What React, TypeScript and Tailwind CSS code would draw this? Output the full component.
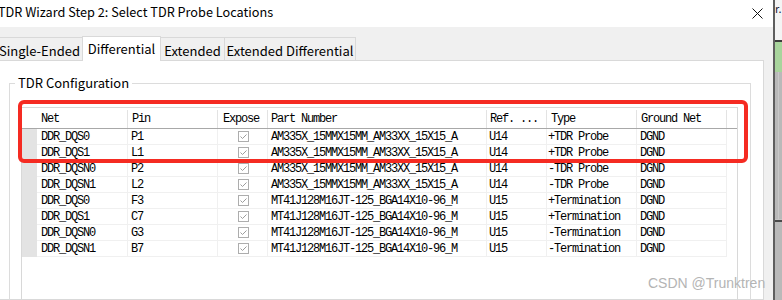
import React from 'react'

const partA = 'AM335X_15MMX15MM_AM33XX_15X15_A'
const partB = 'MT41J128M16JT-125_BGA14X10-96_M'

const rows = [
  ['DDR_DQS0', 'P1', partA, 'U14', '+TDR Probe', 'DGND'],
  ['DDR_DQS1', 'L1', partA, 'U14', '+TDR Probe', 'DGND'],
  ['DDR_DQSN0', 'P2', partA, 'U14', '-TDR Probe', 'DGND'],
  ['DDR_DQSN1', 'L2', partA, 'U14', '-TDR Probe', 'DGND'],
  ['DDR_DQS0', 'F3', partB, 'U15', '+Termination', 'DGND'],
  ['DDR_DQS1', 'C7', partB, 'U15', '+Termination', 'DGND'],
  ['DDR_DQSN0', 'G3', partB, 'U15', '-Termination', 'DGND'],
  ['DDR_DQSN1', 'B7', partB, 'U15', '-Termination', 'DGND'],
]

const mono = "font-['Liberation_Mono',monospace] text-[12px] tracking-[-1.2px]"

function CheckBox() {
  return (
    <span className="flex h-[11px] w-[11px] items-center justify-center border border-[#adadad] bg-white">
      <svg width="9" height="9" viewBox="0 0 9 9">
        <path d="M1.5 4.5 L3.5 6.5 L7.5 2.5" fill="none" stroke="#9c9c9c" strokeWidth="1" />
      </svg>
    </span>
  )
}

function TitleBar() {
  return (
    <div className="flex h-[27px] shrink-0 items-center justify-between bg-white pb-[2px]">
      <span className="-ml-[2px] whitespace-nowrap text-[12.7px] leading-none">TDR Wizard Step 2: Select TDR Probe Locations</span>
      <svg className="mr-[10px] mt-[2px]" width="11" height="11" viewBox="0 0 11 11">
        <path d="M0.5 0.5 L10.5 10.5 M10.5 0.5 L0.5 10.5" stroke="#111" strokeWidth="1" />
      </svg>
    </div>
  )
}

function Tabs() {
  return (
    <div className="flex h-[24px] shrink-0 items-end whitespace-nowrap text-[13px] leading-none">
      <div className="-ml-[4px] flex h-[23px] w-[87px] items-center justify-center border border-b-0 border-[#d9d9d9] bg-[#f0f0f0] pt-[3px]">
        Single-Ended
      </div>
      <div className="relative z-10 -mb-px -ml-px flex h-[25px] w-[79px] items-center justify-center border border-b-0 border-[#d9d9d9] bg-white pb-[1px]">
        Differential
      </div>
      <div className="-ml-px flex h-[23px] w-[65px] items-center justify-center border border-b-0 border-[#d9d9d9] bg-[#f0f0f0] pt-[3px]">
        Extended
      </div>
      <div className="-ml-px flex h-[23px] w-[132px] items-center justify-center border border-b-0 border-[#d9d9d9] bg-[#f0f0f0] pt-[3px]">
        Extended Differential
      </div>
    </div>
  )
}

function Grid() {
  return (
    <div className={`ml-[11px] h-[220px] w-[717px] shrink-0 whitespace-nowrap border border-[#d8d8d8] ${mono}`}>
      <div className="flex h-[21px] border-b border-[#a8a8a8] pt-[2px]">
        <div className="w-[15px]" />
        <div className="flex w-[91px] items-center border-r border-[#e3e3e3] pl-[4px]">Net</div>
        <div className="flex w-[90px] items-center border-r border-[#e3e3e3] pl-[4px]">Pin</div>
        <div className="flex w-[50px] items-center border-r border-[#e3e3e3] pl-[5px]">Expose</div>
        <div className="flex w-[219px] items-center border-r border-[#e3e3e3] pl-[3px]">Part Number</div>
        <div className="flex w-[60px] items-center border-r border-[#e3e3e3] pl-[3px]">Ref. ...</div>
        <div className="flex w-[90px] items-center border-r border-[#e3e3e3] pl-[4px]">Type</div>
        <div className="flex w-[90px] items-center border-r border-[#e3e3e3] pl-[4px]">Ground Net</div>
        <div className="w-[10px]" />
      </div>
      {rows.map((r, i) => (
        <div key={i} className="flex h-[16px]">
          <div className="w-[15px] bg-[#e3e3e3]" />
          <div className="flex w-[91px] items-center border-r border-b border-[#f0f0f0] pl-[4px]">{r[0]}</div>
          <div className="flex w-[90px] items-center border-r border-b border-[#f0f0f0] pl-[3px]">{r[1]}</div>
          <div className="flex w-[50px] items-center justify-center border-r border-b border-[#f0f0f0] pl-[1px]">
            <CheckBox />
          </div>
          <div className="flex w-[219px] items-center border-r border-b border-[#f0f0f0] pl-[3px]">{r[2]}</div>
          <div className="flex w-[60px] items-center border-r border-b border-[#f0f0f0] pl-[2px]">{r[3]}</div>
          <div className="flex w-[90px] items-center border-r border-b border-[#f0f0f0] pl-[1px]">{r[4]}</div>
          <div className="flex w-[90px] items-center border-r border-b border-[#f0f0f0] pl-[3px]">{r[5]}</div>
        </div>
      ))}
    </div>
  )
}

function RightStrip() {
  return (
    <div className="flex w-[7px] shrink-0 flex-col overflow-hidden">
      <div className="h-[40px] shrink-0 whitespace-nowrap bg-[#f4f4f4] pt-[3px] text-[11px] leading-none text-[#223]">r.</div>
      <div className="h-[2px] shrink-0 bg-[#3c3c3c]" />
      <div className="h-[30px] shrink-0 bg-[#a8d49c]" />
      <div className="flex h-[148px] shrink-0 border-b border-[#c4c4c4] bg-[#b9b9b9]">
        <div className="w-[3px]" />
        <div className="w-px bg-[#c8c8c8]" />
      </div>
      <div className="h-[2px] shrink-0 bg-[#4a4a4a]" />
      <div className="flex-1 bg-[#b9b9b9]" />
    </div>
  )
}

export default function App() {
  return (
    <div className="relative flex h-[300px] w-[782px] overflow-hidden bg-white font-['Noto_Sans_CJK_SC','Noto_Sans',sans-serif] text-black">
      <div className="flex h-[300px] w-[773px] shrink-0 flex-col overflow-hidden">
        <TitleBar />
        <div className="flex min-h-0 flex-1 flex-col bg-[#f0f0f0] pt-[9px]">
          <Tabs />
          <div className="-ml-px flex min-h-0 w-[765px] flex-1 flex-col border border-[#d9d9d9] bg-white">
            <fieldset className="ml-[9px] mt-[14px] w-[742px] shrink-0 border border-[#dcdcdc]">
              <legend className="ml-[5px] px-[3px] text-[13px] leading-[16px]">TDR Configuration</legend>
              <div className="pt-[16px]">
                <Grid />
              </div>
            </fieldset>
          </div>
        </div>
      </div>
      <div className="w-[2px] shrink-0 bg-[#5e5e5e]" />
      <RightStrip />

      <div className="pointer-events-none absolute left-[18px] top-[100px] h-[63px] w-[730px] rounded-[6px] border-[4px] border-[#f52b22]" />
      <div className="pointer-events-none absolute left-[648px] top-[273px] font-['Liberation_Sans',sans-serif] text-[14px] text-[#b4b4b4]">
        CSDN @Trunktren
      </div>
    </div>
  )
}
